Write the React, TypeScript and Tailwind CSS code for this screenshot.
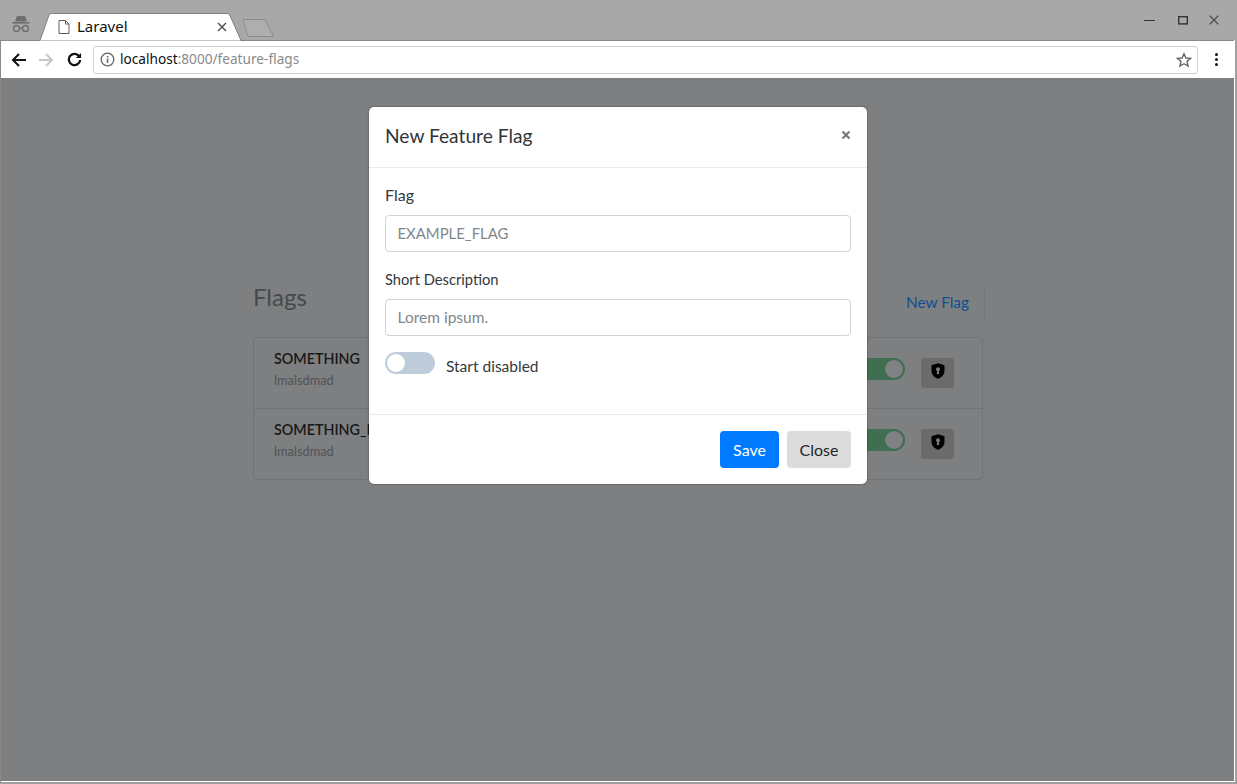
import React from "react";

const font = { fontFamily: '"Lato", "Open Sans", sans-serif' };

function FlagRow({ name, last }: { name: string; last?: boolean }) {
  return (
    <div className={`flex items-start justify-between pl-[20px] pr-[28px] ${last ? "h-[70px]" : "h-[71px] border-b border-[#717273]"}`}>
      <div className="pt-[12px]">
        <div className="text-[14.3px] leading-[18px] font-semibold text-[#17181a]">{name}</div>
        <div className="mt-[4px] text-[12.8px] leading-[16px] text-[#505357]">lmalsdmad</div>
      </div>
      <div className="flex items-start gap-[16px] pt-[20px]">
        <div className="flex h-[22px] w-[50px] items-center justify-end rounded-full bg-[#3f6f50] pr-[2px]">
          <div className="h-[18px] w-[18px] rounded-full bg-[#808182]" />
        </div>
        <div className="flex h-[30px] w-[33px] items-start justify-center rounded-[3px] bg-[#6b6b6c] pt-[5px]">
          <svg width="14" height="16" viewBox="0 0 14 16">
            <path d="M7 0.3 L13.5 2.3 V8 C13.5 11.5 10.5 14.5 7 15.7 C3.5 14.5 0.5 11.5 0.5 8 V2.3 Z" fill="#000" />
            <circle cx="7" cy="6.2" r="2" fill="#7a7a7a" />
            <path d="M6.3 7 H7.7 L8.3 11 H5.7 Z" fill="#7a7a7a" />
          </svg>
        </div>
      </div>
    </div>
  );
}

export default function App() {
  return (
    <div className="relative flex h-[784px] w-[1237px] flex-col overflow-hidden bg-[#a0a0a0]" style={font}>
      {/* Tab strip */}
      <div className="flex h-[40px] shrink-0 items-start bg-[#a8a8a8]">
        <div className="flex h-[40px] w-[38px] items-center justify-center pl-[4px] pt-[10px]">
          <svg width="20" height="20" viewBox="0 0 20 20" fill="none">
            <path d="M5 3.5 L6 1 H14 L15 3.5 L16 6.5 H4 Z" fill="#6e6e6e" />
            <rect x="1.5" y="7" width="17" height="1.6" fill="#6e6e6e" />
            <circle cx="5.5" cy="13.5" r="3" stroke="#6e6e6e" strokeWidth="1.4" />
            <circle cx="14.5" cy="13.5" r="3" stroke="#6e6e6e" strokeWidth="1.4" />
            <path d="M8.5 13 H11.5" stroke="#6e6e6e" strokeWidth="1.2" />
          </svg>
        </div>
        <div className="relative z-10 mt-[13px] h-[28px] w-[206px]">
          <svg className="absolute inset-0" width="206" height="28" viewBox="0 0 206 28">
            <path d="M0 27.5 H2 L11 2 Q11.6 0.5 13.5 0.5 H189 Q191 0.5 191.7 2 L203 27.5 H206" fill="#fff" stroke="#7f7f7f" strokeWidth="1" />
          </svg>
          <div className="relative flex h-full items-center pb-[1px] pl-[20px]">
            <svg width="12" height="14" viewBox="0 0 12 14" fill="none" stroke="#5f5f5f" strokeWidth="1">
              <path d="M1 .5 H7.5 L11 4 V13.5 H1 Z M7.5 .5 V4 H11" />
            </svg>
            <span className="ml-[7px] w-[141px] text-[15px] text-[#111] [font-family:'Noto_Sans','Lato',sans-serif]">Laravel</span>
            <svg className="-ml-[1px]" width="10" height="10" viewBox="0 0 10 10" stroke="#555" strokeWidth="1.5">
              <path d="M1 1 L9 9 M9 1 L1 9" />
            </svg>
          </div>
        </div>
        <svg className="mt-[18px] -ml-[4px]" width="36" height="20" viewBox="0 0 36 20" fill="#aeaeae" stroke="#8c8c8c">
          <path d="M3 2 Q3 1.5 4 1.5 H25 L33 17 Q33.5 18.5 32 18.5 H9 Q8 18.5 7.5 17 Z" />
        </svg>
        <div className="flex-1" />
        <div className="flex h-[40px] items-start pr-[18px] pt-[16px]">
          <svg width="11" height="9" viewBox="0 0 11 9" stroke="#333" strokeWidth="1"><path d="M0 4.5 H11" /></svg>
          <svg className="ml-[23px]" width="10" height="9" viewBox="0 0 10 9" fill="none" stroke="#333" strokeWidth="1.4"><rect x=".7" y=".7" width="8.6" height="7.2" /></svg>
          <svg className="ml-[21px] -mt-[1px]" width="10" height="10" viewBox="0 0 10 10" stroke="#444" strokeWidth="1.2"><path d="M.7 .7 L9.3 9.3 M9.3 .7 L.7 9.3" /></svg>
        </div>
      </div>

      {/* Window body */}
      <div className="mb-[2px] mr-[2px] flex flex-1 flex-col border-l border-[#8a8a8a] bg-white pb-[1px] pr-[1px]">
        {/* Toolbar */}
        <div className="flex h-[38px] shrink-0 items-center border-t border-[#8a8a8a] bg-white pl-[10px] pr-[16px]">
          <svg width="15" height="14" viewBox="0 0 15 14" fill="none" stroke="#111" strokeWidth="2"><path d="M15 7 H2 M8 1 L2 7 L8 13" /></svg>
          <svg className="ml-[13px]" width="15" height="14" viewBox="0 0 15 14" fill="none" stroke="#c8c8c8" strokeWidth="2"><path d="M0 7 H13 M7 1 L13 7 L7 13" /></svg>
          <svg className="ml-[13px]" width="15" height="15" viewBox="0 0 16 16" fill="none">
            <path d="M13.2 5 A6 6 0 1 0 14 8.5" stroke="#111" strokeWidth="2.4" />
            <path d="M9.5 6.5 H15 V1 Z" fill="#111" />
          </svg>
          <div className="ml-[11px] flex h-[28px] flex-1 items-center rounded-[3px] border border-[#cfcfcf] bg-white pl-[6px] pr-[5px]">
            <svg width="15" height="15" viewBox="0 0 15 15" fill="none">
              <circle cx="7.5" cy="7.5" r="6.3" stroke="#666" strokeWidth="1.3" />
              <rect x="6.8" y="6.5" width="1.5" height="4.5" fill="#666" />
              <rect x="6.8" y="4" width="1.5" height="1.5" fill="#666" />
            </svg>
            <span className="ml-[5px] text-[13.65px] [font-family:'Noto_Sans','Lato',sans-serif] text-[#111]">
              localhost<span className="text-[#8a8a8a]">:8000/feature-flags</span>
            </span>
            <div className="flex-1" />
            <svg width="16" height="16" viewBox="0 0 16 16" fill="none" stroke="#666" strokeWidth="1.4">
              <path d="M8 1.7 L9.9 6 L14.6 6.4 L11 9.5 L12.1 14.1 L8 11.7 L3.9 14.1 L5 9.5 L1.4 6.4 L6.1 6 Z" />
            </svg>
          </div>
          <div className="ml-[17px] flex flex-col gap-[2px]">
            <div className="h-[3px] w-[3px] rounded-full bg-[#111]" />
            <div className="h-[3px] w-[3px] rounded-full bg-[#111]" />
            <div className="h-[3px] w-[3px] rounded-full bg-[#111]" />
          </div>
        </div>

        {/* Page */}
        <div className="flex-1 bg-[#7e7f80] pl-[252px]">
          <div className="w-[730px] pt-[205px]">
            <div className="flex h-[54px] items-start justify-between">
              <div className="text-[24px] leading-[28px] text-[#45494d]">Flags</div>
              <div className="-mr-[2px] mt-[4px] flex h-[31px] items-center border-r border-[#747576] pr-[15px]">
                <span className="text-[15.4px] text-[#0d4f94]">New Flag</span>
              </div>
            </div>
            <div className="rounded-[4px] border border-[#717273]">
              <FlagRow name="SOMETHING" />
              <FlagRow name="SOMETHING_ELSE" last />
            </div>
          </div>
        </div>
      </div>

      {/* Modal */}
      <div className="absolute left-[369px] top-[107px] flex h-[377px] w-[498px] flex-col rounded-[5px] bg-white shadow-[0_0_2px_rgba(0,0,0,0.5)]">
        <div className="flex h-[61px] items-start justify-between border-b border-[#e9ecef] px-[16px]">
          <div className="pt-[15px] text-[19.2px] leading-[28px] text-[#30353a]">New Feature Flag</div>
          <div className="pt-[23px]">
            <svg width="10" height="10" viewBox="0 0 10 10" stroke="#7a7a7a" strokeWidth="2.2"><path d="M1.5 1.5 L8.5 8.5 M8.5 1.5 L1.5 8.5" /></svg>
          </div>
        </div>
        <div className="flex-1 px-[16px] pt-[15px]">
          <div className="text-[16px] leading-[24px] text-[#33383d]">Flag</div>
          <div className="mt-[8px] flex h-[37px] items-center rounded-[4px] border border-[#ced4da] pl-[11.5px] text-[14.9px] text-[#7f868d]">EXAMPLE_FLAG</div>
          <div className="mt-[15px] text-[14.7px] leading-[24px] text-[#33383d]">Short Description</div>
          <div className="mt-[8px] flex h-[37px] items-center rounded-[4px] border border-[#ced4da] pl-[11.5px] text-[15.5px] text-[#7f868d]">Lorem ipsum.</div>
          <div className="mt-[16px] flex items-start">
            <div className="flex h-[22px] w-[50px] items-center rounded-full bg-[#bfccdc] pl-[2px]">
              <div className="h-[18px] w-[18px] rounded-full bg-white" />
            </div>
            <span className="ml-[11px] pt-[2px] text-[15.5px] leading-[24px] text-[#33383d]">Start disabled</span>
          </div>
        </div>
        <div className="flex h-[70px] items-start justify-end gap-[8px] border-t border-[#e9ecef] px-[16px] pt-[16px]">
          <div className="flex h-[37px] w-[59px] items-center justify-center rounded-[4px] bg-[#007bff] text-[16px] text-white">Save</div>
          <div className="flex h-[37px] w-[64px] items-center justify-center rounded-[4px] bg-[#dcdcdc] text-[16px] text-[#212529]">Close</div>
        </div>
      </div>
    </div>
  );
}
